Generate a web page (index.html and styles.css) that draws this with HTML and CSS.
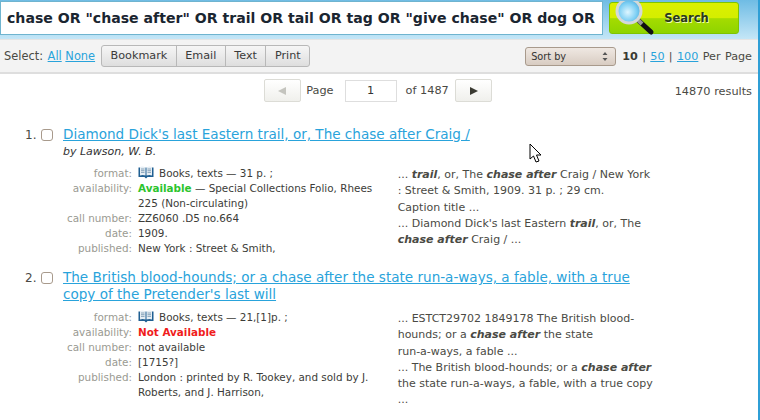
FILE: index.html
```html
<!DOCTYPE html>
<html lang="en">
<head>
    <meta charset="UTF-8">
    <title>Search results</title>
    <link rel="stylesheet" href="styles.css">
</head>
<body>
    <header class="search-bar">
        <div class="search-input">chase OR "chase after" OR trail OR tail OR tag OR "give chase" OR dog OR</div>
        <button class="search-button">
            <svg class="search-icon" width="54" height="36" viewBox="0 0 54 36">
                <defs>
                    <radialGradient id="lens" cx="0.45" cy="0.55" r="0.6">
                        <stop offset="0" stop-color="#dff6ff"/>
                        <stop offset="0.6" stop-color="#7fd0f4"/>
                        <stop offset="1" stop-color="#4aa9dc"/>
                    </radialGradient>
                </defs>
                <path d="M26 20 L38 31" stroke="#111" stroke-width="5" stroke-linecap="round"/>
                <path d="M25 19 L29 23" stroke="#999" stroke-width="4"/>
                <circle cx="16" cy="10" r="12" fill="url(#lens)" stroke="#d4d8d8" stroke-width="3"/>
            </svg>
            <span>Search</span>
        </button>
    </header>

    <div class="toolbar">
        <span class="select-label">Select: <a href="#">All</a> <a class="select-none" href="#">None</a></span>
        <div class="button-group">
            <a class="tool-button">Bookmark</a><a class="tool-button">Email</a><a class="tool-button">Text</a><a class="tool-button">Print</a>
        </div>
        <div class="toolbar-right">
            <div class="sort-select">Sort by
                <svg width="6" height="9" viewBox="0 0 6 9"><path d="M3 0 L5.5 3 H0.5 Z M3 9 L0.5 6 H5.5 Z" fill="#555"/></svg>
            </div>
            <span class="per-page"><b>10</b> | <a href="#">50</a> | <a href="#">100</a> Per Page</span>
        </div>
    </div>

    <div class="pager">
        <div class="pager-center">
            <a class="page-arrow"><svg width="9" height="8" viewBox="0 0 9 8"><path d="M0 4 L8 0 V8 Z" fill="#c4c4be"/></svg></a>
            <span class="page-label">Page</span>
            <div class="page-input">1</div>
            <span class="page-total">of 1487</span>
            <a class="page-arrow"><svg width="9" height="8" viewBox="0 0 9 8"><path d="M9 4 L1 0 V8 Z" fill="#3a3a32"/></svg></a>
        </div>
        <span class="result-count">14870 results</span>
    </div>

    <div class="results">
        <div class="result">
            <div class="result-num">1.</div>
            <div class="checkbox"></div>
            <div class="result-body">
                <a class="result-title" href="#">Diamond Dick's last Eastern trail, or, The chase after Craig /</a>
                <div class="result-author">by Lawson, W. B.</div>
                <div class="result-columns">
                    <div class="meta">
                        <div class="meta-key">format:</div>
                        <div><svg class="book-icon" width="16" height="13" viewBox="0 0 16 13"><use href="#book"/></svg>Books, texts — 31 p. ;</div>
                        <div class="meta-key">availability:</div>
                        <div><b class="available">Available</b> — Special Collections Folio, Rhees 225 (Non-circulating)</div>
                        <div class="meta-key">call number:</div>
                        <div>ZZ6060 .D5 no.664</div>
                        <div class="meta-key">date:</div>
                        <div>1909.</div>
                        <div class="meta-key">published:</div>
                        <div>New York : Street &amp; Smith,</div>
                    </div>
                    <div class="snippets">
                        <p>... <b>trail</b>, or, The <b>chase after</b> Craig / New York<br>: Street &amp; Smith, 1909. 31 p. ; 29 cm.<br>Caption title ...</p>
                        <p>... Diamond Dick's last Eastern <b>trail</b>, or, The<br><b>chase after</b> Craig / ...</p>
                    </div>
                </div>
            </div>
        </div>

        <div class="result">
            <div class="result-num">2.</div>
            <div class="checkbox"></div>
            <div class="result-body">
                <a class="result-title" href="#">The British blood-hounds; or a chase after the state run-a-ways, a fable, with a true<br>copy of the Pretender's last will</a>
                <div class="result-columns">
                    <div class="meta">
                        <div class="meta-key">format:</div>
                        <div><svg class="book-icon" width="16" height="13" viewBox="0 0 16 13"><use href="#book"/></svg>Books, texts — 21,[1]p. ;</div>
                        <div class="meta-key">availability:</div>
                        <div><b class="unavailable">Not Available</b></div>
                        <div class="meta-key">call number:</div>
                        <div>not available</div>
                        <div class="meta-key">date:</div>
                        <div>[1715?]</div>
                        <div class="meta-key">published:</div>
                        <div>London : printed by R. Tookey, and sold by J. Roberts, and J. Harrison,</div>
                    </div>
                    <div class="snippets">
                        <p>... ESTCT29702 1849178 The British blood-<br>hounds; or a <b>chase after</b> the state<br>run-a-ways, a fable ...</p>
                        <p>... The British blood-hounds; or a <b>chase after</b><br>the state run-a-ways, a fable, with a true copy<br>...</p>
                    </div>
                </div>
            </div>
        </div>
    </div>

    <svg class="cursor" width="14" height="20" viewBox="0 0 14 20">
        <path d="M1 1 V16 L4.5 13 L7 19 L10 18 L7.5 12 H12 Z" fill="#fff" stroke="#000" stroke-width="1"/>
    </svg>

    <svg class="sprites" width="0" height="0">
        <symbol id="book" viewBox="0 0 16 13">
            <path d="M0.5 1.5 H7.5 L8 2.2 L8.5 1.5 H15.5 V11 H9.5 L8 12.5 L6.5 11 H0.5 Z" fill="#1f5f92"/>
            <path d="M2 1 Q5 0 7.5 1.6 V9.6 Q5 8.4 2 9.4 Z M14 1 Q11 0 8.5 1.6 V9.6 Q11 8.4 14 9.4 Z" fill="#e6eef4"/>
            <path d="M3 3 H6.5 M3 4.7 H6.5 M3 6.4 H6.5 M9.5 3 H13 M9.5 4.7 H13 M9.5 6.4 H13" stroke="#7d9ab2" stroke-width="0.9"/>
        </symbol>
    </svg>
</body>
</html>
```

FILE: styles.css
```css
body {
    margin: 0;
    height: 420px;
    overflow: hidden;
    position: relative;
    font-family: 'DejaVu Sans', sans-serif;
    font-size: 11px;
    color: #4a4a44;
    background-color: #ffffff;
    border-right: 2px solid #2f9fd6;
    box-sizing: border-box;
}
a {
    color: #29a3db;
    text-decoration: underline;
}
.search-bar {
    display: flex;
    height: 39px;
    box-sizing: border-box;
    padding-top: 1px;
    background: linear-gradient(to bottom, #6fbce4, #c4e6f7);
}
.search-input {
    width: 603px;
    height: 34px;
    box-sizing: border-box;
    border: 1px solid #6fb4cf;
    background-color: #ffffff;
    color: #1a2530;
    font-size: 14.1px;
    font-weight: 700;
    line-height: 32px;
    padding-left: 6px;
    white-space: nowrap;
    overflow: hidden;
}
.search-button {
    position: relative;
    width: 130px;
    height: 32px;
    margin: 1px 0 0 6px;
    padding: 0 0 0 25px;
    border: 1px solid #7fc400;
    border-radius: 3px;
    background: linear-gradient(to bottom, #dcf000 0, #d4ee00 50%, #a4dc00 52%, #8fd400 100%);
    font-family: inherit;
    font-size: 11.5px;
    font-weight: 700;
    color: #2a3a1a;
    text-shadow: 1px 1px 0 #f2fbb0;
}
.search-icon {
    position: absolute;
    left: 3px;
    top: -2px;
}
.toolbar {
    display: flex;
    align-items: center;
    height: 35px;
    box-sizing: border-box;
    padding: 0 6px 0 4px;
    background-color: #f3f3f3;
    border-top: 1px solid #e4e4e4;
    border-bottom: 2px solid #dedede;
    font-size: 11.4px;
}
.select-label a {
    margin-left: 1px;
}
.select-label .select-none {
    margin-left: 0;
}
.button-group {
    display: flex;
    margin-left: 6px;
    border: 1px solid #b8b8b8;
    border-radius: 3px;
    background: linear-gradient(to bottom, #f6f6f6, #dedede);
    font-size: 11.2px;
}
.tool-button {
    padding: 0 8.5px;
    height: 20px;
    line-height: 20px;
    color: #3a3a3a;
    border-left: 1px solid #b8b8b8;
    text-decoration: none;
}
.tool-button:first-child {
    border-left: none;
}
.toolbar-right {
    display: flex;
    align-items: center;
    margin-left: auto;
}
.sort-select {
    display: flex;
    align-items: center;
    justify-content: space-between;
    width: 91px;
    height: 19px;
    box-sizing: border-box;
    padding: 0 7px 0 5px;
    border: 1px solid #a89a8c;
    border-radius: 3px;
    background: linear-gradient(to bottom, #efe8e2, #d8ccc2);
    color: #333333;
    font-size: 10.8px;
    font-stretch: condensed;
}
.per-page {
    margin-left: 6px;
    font-size: 11.2px;
    word-spacing: 0.8px;
}
.per-page b {
    color: #3a3a32;
}
.pager {
    position: relative;
    display: flex;
    justify-content: center;
    height: 42px;
    box-sizing: border-box;
    padding: 5px 0 0 0;
    font-size: 11.3px;
}
.pager-center {
    display: flex;
    align-items: center;
    height: 23px;
    margin-left: -2px;
}
.page-arrow {
    display: flex;
    align-items: center;
    justify-content: center;
    width: 35px;
    height: 21px;
    border: 1px solid #dcdcd6;
    border-radius: 2px;
    background: linear-gradient(to bottom, #ffffff, #f0f0ec);
}
.page-label {
    margin: 0 11px 0 5px;
}
.page-input {
    width: 50px;
    height: 20px;
    border: 1px solid #dedede;
    line-height: 20px;
    text-align: center;
    color: #333333;
}
.page-total {
    margin: 0 6px 0 9px;
}
.result-count {
    position: absolute;
    right: 6px;
    top: 11px;
}
.results {
    padding: 10px 0 0 25px;
}
.result {
    display: flex;
    width: 640px;
    margin-bottom: 13px;
}
.result-num {
    width: 16px;
    font-size: 12px;
    line-height: 18px;
}
.checkbox {
    width: 10px;
    height: 10px;
    margin: 3px 0 0 0;
    border: 1px solid #a89a8c;
    border-radius: 3px;
}
.result-body {
    flex: 1;
    margin-left: 10px;
    min-width: 0;
}
.result-title {
    font-size: 13.55px;
    line-height: 17px;
    white-space: nowrap;
}
.result-author {
    font-style: italic;
    margin-top: 2px;
    line-height: 14px;
    color: #333333;
}
.result-columns {
    display: flex;
    margin-top: 7px;
}
.meta {
    display: grid;
    grid-template-columns: 69px 237px;
    column-gap: 6px;
    font-size: 10.4px;
    line-height: 15px;
    color: #3c3c38;
    width: 338px;
    align-content: start;
}
.meta-key {
    text-align: right;
    color: #9a9a92;
}
.book-icon {
    vertical-align: 0;
    margin: -2px 5px -2px 0;
}
.available {
    color: #2dc42d;
}
.unavailable {
    color: #f01c1c;
}
.snippets {
    width: 270px;
    margin-top: 1px;
    line-height: 16.3px;
    color: #4a4a44;
}
.snippets p {
    margin: 0;
}
.snippets b {
    font-style: italic;
}
.cursor {
    position: absolute;
    left: 529px;
    top: 143px;
}
.sprites {
    position: absolute;
}
```
